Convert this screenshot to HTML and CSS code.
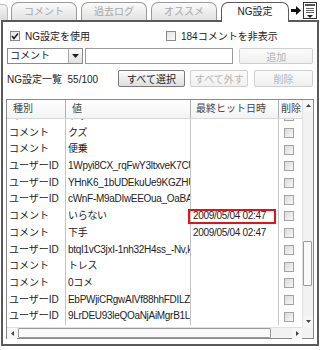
FILE: index.html
```html
<!DOCTYPE html>
<html lang="ja">
<head>
    <meta charset="UTF-8">
    <title>NG設定</title>
    <link rel="stylesheet" href="styles.css">
</head>
<body>
    <!-- tab strip -->
    <div class="tabbar">
        <div class="tab-edge"></div>
        <div class="tab">コメント</div>
        <div class="tab">過去ログ</div>
        <div class="tab">オススメ</div>
        <div class="tab active">NG設定</div>
        <div class="tab-tools">
            <svg class="tool-arrow" width="10" height="9" viewBox="0 0 10 9">
                <polygon points="0,3 5,3 5,0 10,4.5 5,9 5,6 0,6" fill="#111"/>
            </svg>
            <svg class="tool-doc" width="14" height="17" viewBox="0 0 14 17">
                <rect x="0.5" y="0.5" width="13" height="16" fill="#fff" stroke="#333"/>
                <rect x="2" y="2" width="10" height="2" fill="#555"/>
                <line x1="3" y1="6.5" x2="11" y2="6.5" stroke="#666"/>
                <line x1="3" y1="8.5" x2="11" y2="8.5" stroke="#666"/>
                <line x1="3" y1="10.5" x2="11" y2="10.5" stroke="#666"/>
                <polygon points="4,13 10,13 7,16" fill="#222"/>
            </svg>
        </div>
    </div>

    <div class="panel">
        <div class="opt-row">
            <label class="check">
                <span class="box">
                    <svg width="8" height="8" viewBox="0 0 8 8"><polyline points="1,4 3,6.5 7,1.5" fill="none" stroke="#222" stroke-width="1.6"/></svg>
                </span>
                NG設定を使用
            </label>
            <label class="check"><span class="box"></span>184コメントを非表示</label>
        </div>

        <div class="add-row">
            <div class="select">
                <span class="select-value">コメント</span>
                <span class="select-btn">
                    <svg width="7" height="4" viewBox="0 0 7 4"><polygon points="0,0 7,0 3.5,4" fill="#222"/></svg>
                </span>
            </div>
            <div class="text-input"></div>
            <button class="btn add-btn" disabled>追加</button>
        </div>

        <div class="list-row">
            <span class="count">NG設定一覧&nbsp;&nbsp;55/100</span>
            <button class="btn select-all">すべて選択</button>
            <button class="btn clear-all" disabled>すべて外す</button>
            <button class="btn remove" disabled>削除</button>
        </div>

        <!-- NG list grid -->
        <div class="grid">
            <div class="grid-main">
                <div class="grid-head">
                    <div class="cell kind">種別</div>
                    <div class="cell value">値</div>
                    <div class="cell date">最終ヒット日時</div>
                    <div class="cell del">削除</div>
                </div>
                <div class="grid-body">
                    <div class="rows">
                        <div class="row"><div class="cell kind">コメント</div><div class="cell value">ウザい</div><div class="cell date"></div><div class="cell del"><span class="cb"></span></div></div>
                        <div class="row"><div class="cell kind">コメント</div><div class="cell value">クズ</div><div class="cell date"></div><div class="cell del"><span class="cb"></span></div></div>
                        <div class="row"><div class="cell kind">コメント</div><div class="cell value">便乗</div><div class="cell date"></div><div class="cell del"><span class="cb"></span></div></div>
                        <div class="row"><div class="cell kind">ユーザーID</div><div class="cell value">1Wpyi8CX_rqFwY3ltxveK7CUbn</div><div class="cell date"></div><div class="cell del"><span class="cb"></span></div></div>
                        <div class="row"><div class="cell kind">ユーザーID</div><div class="cell value">YHnK6_1bUDEkuUe9KGZHUFsd</div><div class="cell date"></div><div class="cell del"><span class="cb"></span></div></div>
                        <div class="row"><div class="cell kind">ユーザーID</div><div class="cell value">cWnF-M9aDIwEEOua_OaBAIxk</div><div class="cell date"></div><div class="cell del"><span class="cb"></span></div></div>
                        <div class="row"><div class="cell kind">コメント</div><div class="cell value">いらない</div><div class="cell date marked">2009/05/04 02:47</div><div class="cell del"><span class="cb"></span></div></div>
                        <div class="row"><div class="cell kind">コメント</div><div class="cell value">下手</div><div class="cell date">2009/05/04 02:47</div><div class="cell del"><span class="cb"></span></div></div>
                        <div class="row"><div class="cell kind">ユーザーID</div><div class="cell value">btqI1vC3jxI-1nh32H4ss_-Nv,k</div><div class="cell date"></div><div class="cell del"><span class="cb"></span></div></div>
                        <div class="row"><div class="cell kind">コメント</div><div class="cell value">トレス</div><div class="cell date"></div><div class="cell del"><span class="cb"></span></div></div>
                        <div class="row"><div class="cell kind">コメント</div><div class="cell value">0コメ</div><div class="cell date"></div><div class="cell del"><span class="cb"></span></div></div>
                        <div class="row"><div class="cell kind">ユーザーID</div><div class="cell value">EbPWjiCRgwAIVf88hhFDILZNq</div><div class="cell date"></div><div class="cell del"><span class="cb"></span></div></div>
                        <div class="row"><div class="cell kind">ユーザーID</div><div class="cell value">9LrDEU93leQOaNjAiMgrB1L_'x</div><div class="cell date"></div><div class="cell del"><span class="cb"></span></div></div>
                    </div>
                </div>
            </div>

            <div class="vscroll">
                <div class="sb-btn">
                    <svg width="5" height="3" viewBox="0 0 5 3"><polygon points="0,3 5,3 2.5,0" fill="#444"/></svg>
                </div>
                <div class="v-track"><div class="v-thumb"></div></div>
                <div class="sb-btn">
                    <svg width="5" height="3" viewBox="0 0 5 3"><polygon points="0,0 5,0 2.5,3" fill="#444"/></svg>
                </div>
            </div>

            <div class="hscroll">
                <div class="sb-btn">
                    <svg width="3" height="5" viewBox="0 0 3 5"><polygon points="3,0 3,5 0,2.5" fill="#444"/></svg>
                </div>
                <div class="h-track"><div class="h-thumb"></div></div>
                <div class="sb-btn">
                    <svg width="3" height="5" viewBox="0 0 3 5"><polygon points="0,0 0,5 3,2.5" fill="#444"/></svg>
                </div>
            </div>
            <div class="corner"></div>
        </div>
    </div>
</body>
</html>
```

FILE: styles.css
```css
:root {
    --text: #222;
    --muted: #b4b4b4;
    --line: #c4c4c4;
    --frame: #5a5a5a;
}

body {
    margin: 0;
    width: 320px;
    height: 350px;
    overflow: hidden;
    background: #fff;
    color: var(--text);
    font-family: "Liberation Sans", "Noto Sans CJK JP", sans-serif;
    font-size: 10px;
}

/* tabs */
.tabbar {
    display: flex;
    align-items: flex-end;
    height: 20px;
    gap: 4px;
}

.tab-edge {
    width: 7px;
    height: 15px;
    margin-right: -1px;
    border: 1px solid #bbb;
    border-left: none;
    border-bottom: none;
    border-radius: 0 5px 0 0;
    background: linear-gradient(#f4f4f4, #dcdcdc);
}

.tab {
    width: 66px;
    height: 18px;
    box-sizing: border-box;
    border: 1px solid #9a9a9a;
    border-bottom: none;
    border-radius: 7px 7px 0 0;
    background: linear-gradient(#fbfbfb, #e2e2e2);
    color: #a8a8a8;
    text-align: center;
    line-height: 17px;
}

.tab.active {
    width: 68px;
    height: 20px;
    margin-bottom: -2px;
    position: relative;
    z-index: 1;
    border-color: var(--frame);
    background: #fff;
    color: var(--text);
    line-height: 18px;
}

.tab-tools {
    display: flex;
    align-items: flex-start;
    align-self: flex-start;
    gap: 2px;
    padding-top: 2px;
    margin-left: -2px;
}

.tool-arrow {
    margin-top: 4px;
}

/* main panel */
.panel {
    box-sizing: border-box;
    width: 318px;
    height: 326px;
    margin-left: 1px;
    padding: 0 4px 0 4px;
    border: 2px solid var(--frame);
}

.opt-row {
    display: grid;
    grid-template-columns: 156px 1fr;
    height: 12px;
    margin-top: 6px;
    padding-left: 3px;
}

.check {
    display: flex;
    align-items: center;
    gap: 5px;
}

.box {
    display: flex;
    align-items: center;
    justify-content: center;
    width: 10px;
    height: 10px;
    box-sizing: border-box;
    border: 1px solid #8a8a8a;
    background: linear-gradient(135deg, #e4e4e4, #fafafa);
}

.add-row {
    display: flex;
    height: 16px;
    margin-top: 8px;
}

.select {
    display: flex;
    width: 76px;
    box-sizing: border-box;
    border: 1px solid #8a8a8a;
}

.select-value {
    flex: 1;
    padding-left: 2px;
    line-height: 14px;
}

.select-btn {
    display: flex;
    align-items: center;
    justify-content: center;
    width: 13px;
    border-left: 1px solid #aaa;
    background: linear-gradient(#fafafa, #e2e2e2);
}

.text-input {
    width: 149px;
    margin-left: 2px;
    box-sizing: border-box;
    border: 1px solid #9a9a9a;
}

.btn {
    box-sizing: border-box;
    height: 17px;
    padding: 0;
    border: 1px solid #7a7a7a;
    border-radius: 2px;
    background: linear-gradient(#fdfdfd, #dedede);
    color: var(--text);
    font: inherit;
}

.btn:disabled {
    border-color: #cfcfcf;
    background: linear-gradient(#fbfbfb, #f0f0f0);
    color: var(--muted);
}

.add-btn {
    width: 74px;
    height: 16px;
    margin-left: 6px;
}

.list-row {
    display: flex;
    align-items: center;
    height: 17px;
    margin-top: 6px;
}

.count {
    width: 111px;
}

.select-all {
    width: 68px;
}

.clear-all {
    width: 58px;
    margin-left: 5px;
}

.remove {
    width: 59px;
    margin-left: 6px;
}

/* list grid */
.grid {
    display: grid;
    grid-template-columns: 295px 11px;
    grid-template-rows: 227px 11px;
    width: 308px;
    margin: 12px 0 0 -1px;
    box-sizing: border-box;
    border: 1px solid #8a8a8a;
}

.grid-main {
    overflow: hidden;
}

.grid-head,
.row {
    display: flex;
}

.grid-head {
    height: 19px;
    box-sizing: border-box;
    border-bottom: 1px solid #d8d8d8;
    background: linear-gradient(#fff, #f3f3f3);
    color: #444;
    line-height: 18px;
}

.cell {
    box-sizing: border-box;
    border-right: 1px solid var(--line);
    overflow: hidden;
    white-space: nowrap;
    padding-left: 2px;
}

.grid-head .cell {
    border-right-color: #b0b0b0;
    padding-left: 6px;
}

.grid-head .date {
    padding-left: 5px;
}

.kind { width: 59px; flex: none; }
.value { width: 125px; flex: none; }
.date { width: 88px; flex: none; }
.del { width: 23px; flex: none; border-right: none; }

.row .value,
.row .date {
    letter-spacing: -0.3px;
}

.grid-head .del {
    padding-left: 2px;
}

.grid-body {
    height: 208px;
    overflow: hidden;
}

.rows {
    margin-top: -11px;
}

.row {
    height: 16.7px;
    line-height: 16.7px;
}

.row .del {
    display: flex;
    align-items: center;
    padding-left: 5px;
}

.cb {
    width: 10px;
    height: 10px;
    box-sizing: border-box;
    border: 1px solid #a4a4a4;
    background: linear-gradient(135deg, #dadada, #f7f7f7);
}

.date.marked {
    position: relative;
    overflow: visible;
}

.date.marked::after {
    content: "";
    position: absolute;
    left: -3px;
    top: 1px;
    width: 88px;
    height: 15px;
    box-sizing: border-box;
    border: 2px solid #e0141a;
}

/* scrollbars */
.vscroll {
    display: flex;
    flex-direction: column;
    border-left: 1px solid #e0e0e0;
    background: #f2f2f2;
}

.hscroll {
    display: flex;
    border-top: 1px solid #e0e0e0;
    background: #f2f2f2;
}

.sb-btn {
    display: flex;
    align-items: center;
    justify-content: center;
    width: 10px;
    height: 11px;
    flex: none;
    background: #f6f6f6;
}

.v-track {
    flex: 1;
    padding-top: 130px;
}

.v-thumb {
    width: 9px;
    height: 45px;
    box-sizing: border-box;
    border: 1px solid #9a9a9a;
    border-radius: 1px;
    background: #f9f9f9;
}

.h-track {
    flex: 1;
    padding-left: 1px;
}

.h-thumb {
    width: 253px;
    height: 10px;
    box-sizing: border-box;
    border: 1px solid #9a9a9a;
    border-radius: 1px;
    background: #f9f9f9;
}

.corner {
    background: #f2f2f2;
}
```
